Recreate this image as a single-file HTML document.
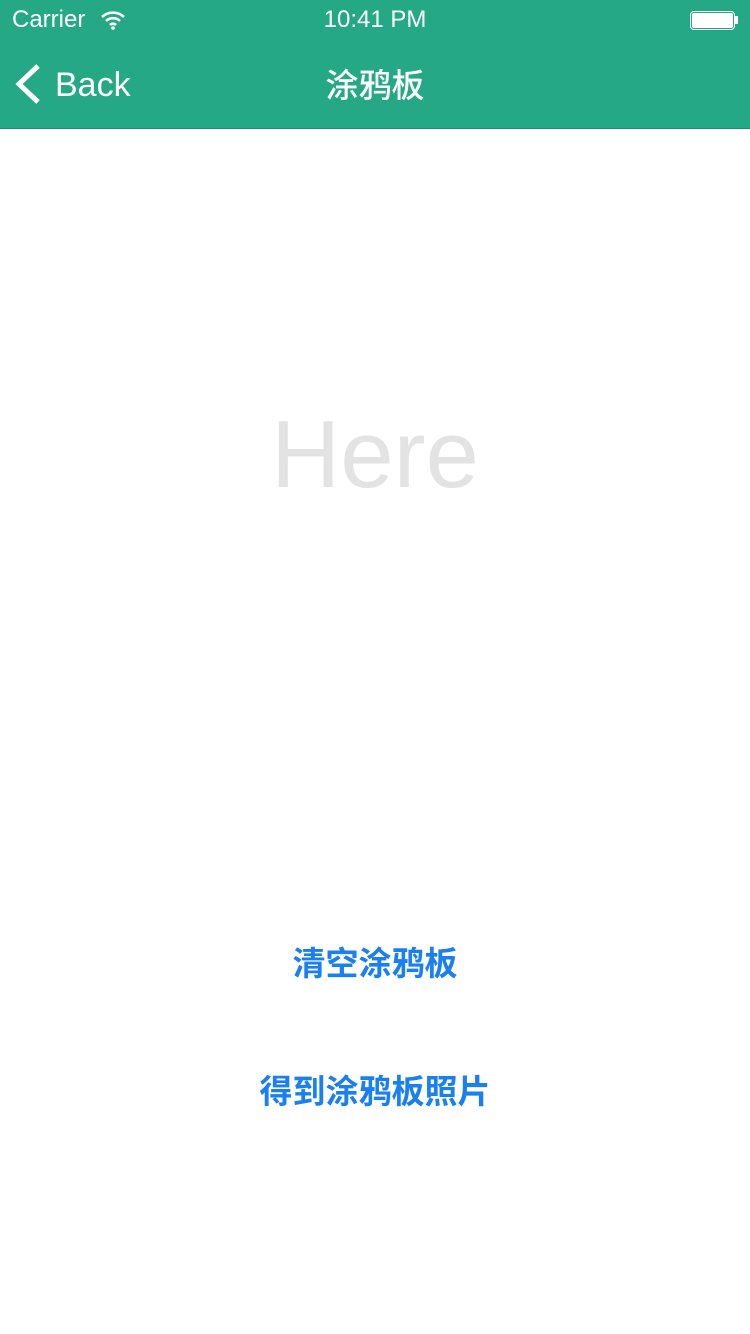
<!DOCTYPE html>
<html><head><meta charset="utf-8"><style>
body{margin:0;width:750px;height:1334px;background:#fff;position:relative;overflow:hidden;font-family:"Liberation Sans","Noto Sans CJK SC",sans-serif}
.nav{position:absolute;left:0;top:0;width:750px;height:128px;background:#25a886;border-bottom:1px solid #1e8c70}
.t{position:absolute;color:#fff;white-space:nowrap}
.btn{position:absolute;left:0;width:750px;text-align:center;color:#1a7ff0;font-size:33px;font-weight:bold}
</style></head><body>
<div class="nav">
<div class="t" style="left:12px;top:6px;font-size:24px">Carrier</div>
<svg style="position:absolute;left:100px;top:10px" width="26" height="20" viewBox="0 0 26 20"><path d="M2 7a16 16 0 0 1 22 0M6 11a10 10 0 0 1 14 0M10 15a4 4 0 0 1 6 0" stroke="#fff" stroke-width="2.6" fill="none"/><circle cx="13" cy="18" r="1.8" fill="#fff"/></svg>
<div class="t" style="left:0;width:750px;text-align:center;top:6px;font-size:24px">10:41 PM</div>
<div style="position:absolute;left:690px;top:11px;width:45px;height:19px;border:1px solid #fff;border-radius:4px;box-sizing:border-box;padding:1px"><div style="background:#fff;height:100%;border-radius:2px"></div></div>
<div style="position:absolute;left:735px;top:16px;width:3px;height:8px;background:#fff"></div>
<svg style="position:absolute;left:14px;top:63px" width="28" height="42" viewBox="0 0 28 42"><path d="M24 3L5 21l19 18" stroke="#fff" stroke-width="5" fill="none"/></svg>
<div class="t" style="left:55px;top:66px;font-size:34px">Back</div>
<div class="t" style="left:0;width:750px;text-align:center;top:59px;font-size:33px;font-weight:500">涂鸦板</div>
</div>
<div style="position:absolute;left:0;width:750px;text-align:center;top:400px;font-size:96px;color:#e3e3e3">Here</div>
<div class="btn" style="top:937px">清空涂鸦板</div>
<div class="btn" style="top:1065px">得到涂鸦板照片</div>
</body></html>
